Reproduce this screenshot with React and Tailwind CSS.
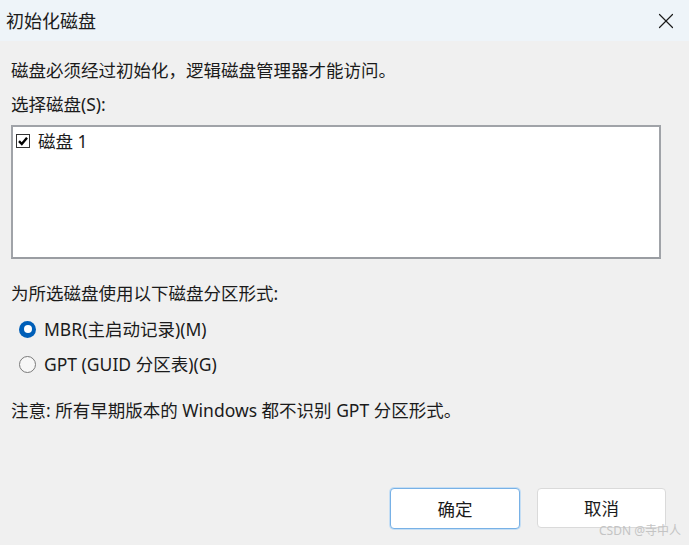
import React from 'react';
import { X } from 'lucide-react';

const font = { fontFamily: '"Noto Sans", "Noto Sans CJK SC", sans-serif' };

const Radio = ({ checked, label }) => (
  <label className="flex items-center h-6">
    {checked ? (
      <span className="w-[17px] h-[17px] rounded-full bg-[#005fb8] flex items-center justify-center">
        <span className="w-[8px] h-[8px] rounded-full bg-white" />
      </span>
    ) : (
      <span className="w-[17px] h-[17px] rounded-full border border-[#7a7a7a] bg-[#f7f7f7]" />
    )}
    <span className="ml-[8px]">{label}</span>
  </label>
);

const App = () => {
  return (
    <div
      className="w-[689px] h-[545px] bg-[#f0f0f0] text-[#1b1b1b] text-[17.5px] leading-6 flex flex-col relative overflow-hidden"
      style={font}
    >
      {/* Title bar */}
      <div className="h-[41px] bg-[#eef4f9] flex items-center justify-between pl-[6px] pr-[10px] shrink-0">
        <span className="text-[18px]">初始化磁盘</span>
        <X className="w-[26px] h-[26px] text-[#1b1b1b]" strokeWidth={1.1} />
      </div>

      <div className="px-[11px] flex flex-col">
        <p className="mt-[17px]">磁盘必须经过初始化，逻辑磁盘管理器才能访问。</p>
        <p className="mt-[10px]">选择磁盘(S):</p>

        {/* Disk list */}
        <div className="mt-[9px] w-[650px] h-[134px] bg-white border-2 border-[#a0a3a8] border-b-[#9a9da2]">
          <div className="flex items-center h-6 mt-[2px] ml-[3px]">
            <span className="w-[14px] h-[14px] border border-[#333] bg-white flex items-center justify-center">
              <svg viewBox="0 0 12 12" className="w-[12px] h-[12px]">
                <path d="M2 6.2 L4.8 9 L10 2.8" fill="none" stroke="#000" strokeWidth="2.4" />
              </svg>
            </span>
            <span className="ml-[8px]">磁盘 1</span>
          </div>
        </div>

        <p className="mt-[22px]">为所选磁盘使用以下磁盘分区形式:</p>

        <div className="mt-[12px] ml-[8px] flex flex-col gap-[11px]">
          <Radio checked label="MBR(主启动记录)(M)" />
          <Radio label="GPT (GUID 分区表)(G)" />
        </div>

        <p className="mt-[22px]">注意: 所有早期版本的 Windows 都不识别 GPT 分区形式。</p>
      </div>

      {/* Buttons */}
      <div className="mt-auto mb-[16px] flex justify-end gap-[17px] pr-[23px]">
        <button className="w-[130px] h-[41px] bg-white border border-[#78b1e6] rounded-[4px] shadow-[0_0_0_1px_#c5def4]">
          确定
        </button>
        <button className="w-[129px] h-[40px] bg-white border border-[#dadada] rounded-[4px]">
          取消
        </button>
      </div>

      <span className="absolute right-[8px] bottom-[6px] text-[12px] leading-4 text-[#c4c4c4]">
        CSDN @寺中人
      </span>
    </div>
  );
};

export default App;
